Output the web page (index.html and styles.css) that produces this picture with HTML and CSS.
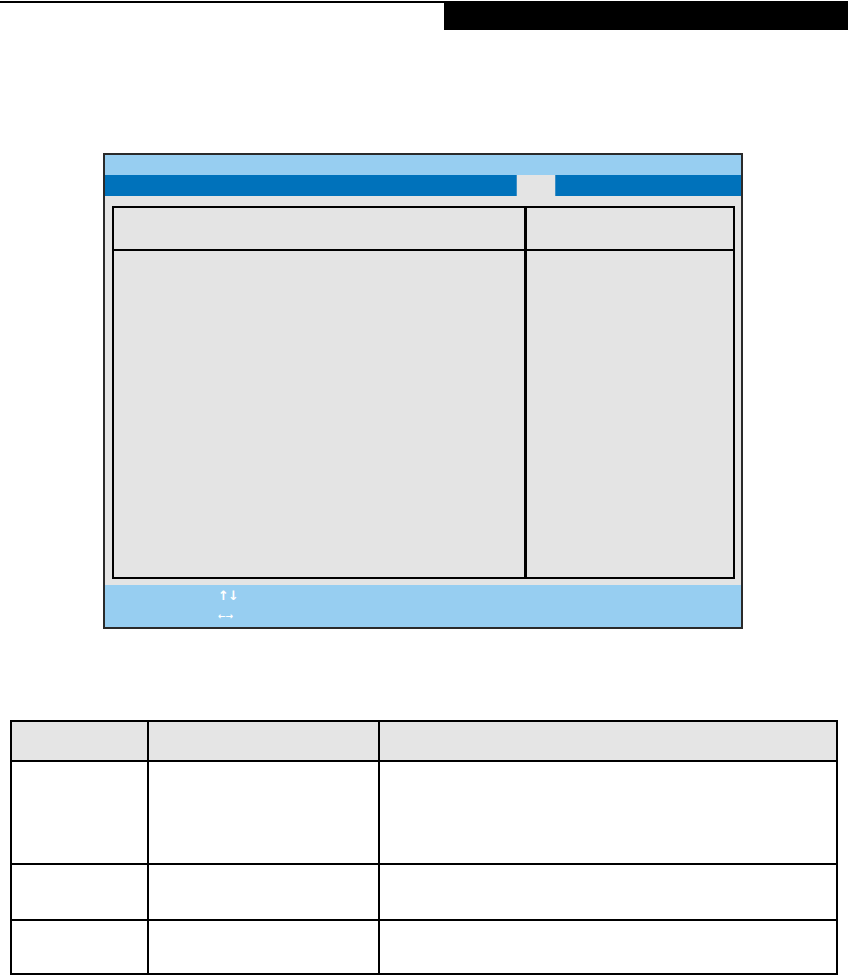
FILE: index.html
```html
<!DOCTYPE html>
<html lang="en">
<head>
    <meta charset="UTF-8">
    <meta name="viewport" content="width=device-width, initial-scale=1.0">
    <title>BIOS Setup</title>
    <link rel="stylesheet" href="styles.css">
</head>
<body>
    <div class="running-head">
        <div class="rule"></div>
        <div class="tab-box"></div>
    </div>

    <div class="bios">
        <div class="title-bar"></div>
        <div class="menu-bar">
            <div class="menu-fill"></div>
            <div class="menu-tab"></div>
            <div class="menu-fill"></div>
        </div>
        <div class="bios-body">
            <div class="panel">
                <div class="panel-head"></div>
                <div class="panel-head side"></div>
                <div class="panel-main"></div>
                <div class="panel-main side"></div>
            </div>
        </div>
        <div class="key-bar">
            <div class="key-line">&#8593;&#8595;</div>
            <div class="key-line lr">&#8592;&#8594;</div>
        </div>
    </div>

    <table class="settings">
        <tr class="head-row">
            <th class="col-a"></th>
            <th class="col-b"></th>
            <th class="col-c"></th>
        </tr>
        <tr class="row-tall">
            <td></td>
            <td></td>
            <td></td>
        </tr>
        <tr class="row-short">
            <td></td>
            <td></td>
            <td></td>
        </tr>
        <tr class="row-last">
            <td></td>
            <td></td>
            <td></td>
        </tr>
    </table>
</body>
</html>
```

FILE: styles.css
```css
* {
    margin: 0;
    padding: 0;
    box-sizing: border-box;
}

body {
    background: #ffffff;
    font-family: 'Liberation Sans', Arial, sans-serif;
    width: 850px;
    height: 976px;
    overflow: hidden;
}

.running-head {
    display: flex;
    padding-top: 1px;
    height: 30px;
}

.rule {
    width: 444px;
    height: 2px;
    background: #000;
}

.tab-box {
    width: 404px;
    height: 29px;
    background: #000;
}

.bios {
    margin: 123px 0 0 103px;
    width: 640px;
    border: 2px solid #2a2a2a;
    background: #e4e4e4;
}

.title-bar {
    height: 20px;
    background: #97cef1;
}

.menu-bar {
    display: flex;
    height: 21px;
}

.menu-fill {
    flex: 1;
    background: #0072bb;
}

.menu-fill:first-child {
    flex: 0 0 412px;
    border-right: 1px solid #3c8fc6;
}

.menu-fill:last-child {
    border-left: 1px solid #3c8fc6;
}

.menu-tab {
    width: 38px;
    background: #e4e4e4;
}

.bios-body {
    padding: 10px 6px 6px 7px;
}

.panel {
    display: grid;
    grid-template-columns: 413px 1fr;
    grid-template-rows: 43px 326px;
    border: 2px solid #000;
}

.panel-head {
    border-bottom: 2px solid #000;
}

.panel-head,
.panel-main {
    border-right: 3px solid #000;
}

.panel-head.side,
.panel-main.side {
    border-right: none;
}

.key-bar {
    height: 42px;
    background: #97cef1;
    padding: 1px 0 0 113px;
    color: #ffffff;
    font-family: 'DejaVu Sans', sans-serif;
    font-size: 13px;
    font-weight: bold;
    line-height: 20px;
}

.key-line {
    letter-spacing: -1px;
}

.key-line.lr {
    font-size: 9px;
    letter-spacing: 0;
}

.settings {
    margin: 91px 0 0 10px;
    width: 828px;
    border-collapse: collapse;
}

.settings th,
.settings td {
    border: 2px solid #000;
}

.head-row {
    height: 40px;
    background: #e5e5e5;
}

.col-a {
    width: 137px;
}

.col-b {
    width: 231px;
}

.row-tall {
    height: 103px;
}

.row-short {
    height: 56px;
}

.row-last {
    height: 54px;
}
```
